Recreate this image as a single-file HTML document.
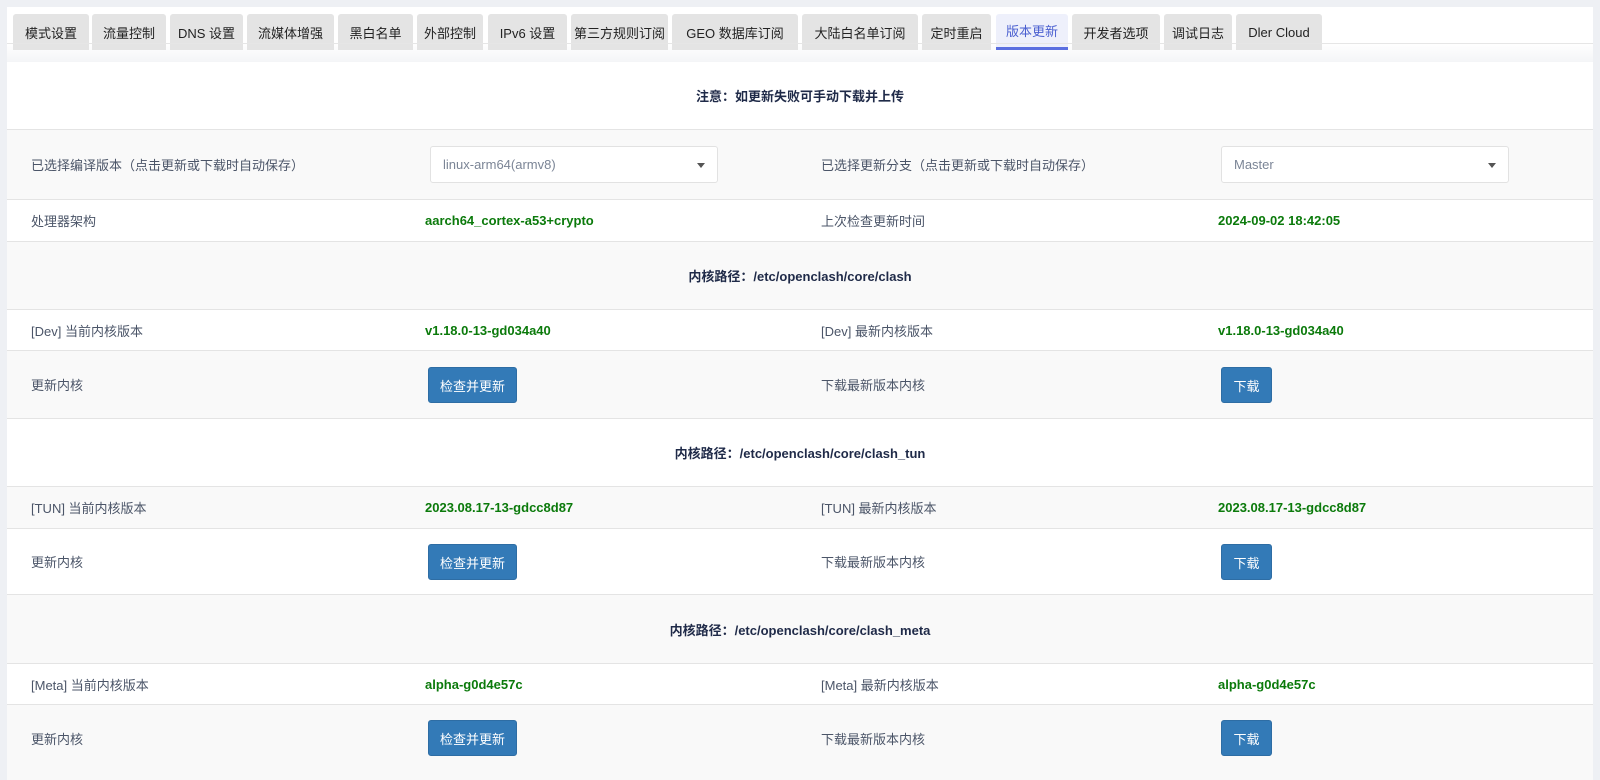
<!DOCTYPE html>
<html><head><meta charset="utf-8"><style>
*{margin:0;padding:0;box-sizing:border-box}
body{width:1600px;height:780px;overflow:hidden;background:#eef0f4;font-family:"Liberation Sans","Noto Sans CJK SC",sans-serif;font-size:13px;color:#4b5568;position:relative}
.wrap{position:absolute;left:7px;top:7px;width:1586px;height:773px;background:#fff}
.tab{position:absolute;top:7px;height:36px;background:#e4e4e4;color:#222;font-size:13px;display:flex;align-items:center;justify-content:center;border-radius:3px 3px 0 0}
.tab.act{background:#eef0fb;color:#4a5fd0;border-bottom:3px solid #5b6fe0}
.tabline{position:absolute;left:0;right:0;top:36px;height:1px;background:#e6e6e6}
.grad{position:absolute;left:0;right:0;top:36px;height:19px;background:linear-gradient(#fff,#f4f5f7)}
.row{position:absolute;left:0;width:1586px;border-top:1px solid #e4e4e4}
.w{background:#fff}.g{background:#f9f9f9}
.c{position:absolute;top:0;bottom:0;display:flex;align-items:center}
.v{color:#0b7a0b;font-weight:bold}
.ctr{position:absolute;left:0;right:0;top:0;bottom:0;display:flex;align-items:center;justify-content:center;font-weight:bold;color:#1f2a48}
.sel{position:absolute;height:37px;width:288px;border:1px solid #e2e2e2;border-radius:3px;background:#fff;color:#7b8596;display:flex;align-items:center;padding-left:12px}
.sel:after{content:"";position:absolute;right:12px;top:16px;border:4px solid transparent;border-top:5px solid #555}
.btn{position:absolute;height:36px;background:#337ab7;color:#fff;border-radius:3px;display:flex;align-items:center;justify-content:center;border:1px solid #2e6da4}
</style></head><body>
<div class="wrap">
<div class="grad"></div>
<div class="tab" style="left:6px;width:76px">模式设置</div>
<div class="tab" style="left:85px;width:74px">流量控制</div>
<div class="tab" style="left:163px;width:73px">DNS 设置</div>
<div class="tab" style="left:240px;width:87px">流媒体增强</div>
<div class="tab" style="left:331px;width:75px">黑白名单</div>
<div class="tab" style="left:410px;width:66px">外部控制</div>
<div class="tab" style="left:481px;width:79px">IPv6 设置</div>
<div class="tab" style="left:564px;width:97px">第三方规则订阅</div>
<div class="tab" style="left:665px;width:126px">GEO 数据库订阅</div>
<div class="tab" style="left:795px;width:116px">大陆白名单订阅</div>
<div class="tab" style="left:915px;width:69px">定时重启</div>
<div class="tab act" style="left:989px;width:72px">版本更新</div>
<div class="tab" style="left:1065px;width:88px">开发者选项</div>
<div class="tab" style="left:1157px;width:68px">调试日志</div>
<div class="tab" style="left:1229px;width:86px">Dler Cloud</div>
<div class="tabline"></div>

<div class="row w" style="top:55px;height:67px;border-top:none"><div class="ctr">注意：如更新失败可手动下载并上传</div></div>
<div class="row g" style="top:122px;height:70px">
 <div class="c" style="left:24px">已选择编译版本（点击更新或下载时自动保存）</div>
 <div class="sel" style="left:423px;top:16px">linux-arm64(armv8)</div>
 <div class="c" style="left:814px">已选择更新分支（点击更新或下载时自动保存）</div>
 <div class="sel" style="left:1214px;top:16px">Master</div>
</div>
<div class="row w" style="top:192px;height:42px">
 <div class="c" style="left:24px">处理器架构</div><div class="c v" style="left:418px">aarch64_cortex-a53+crypto</div>
 <div class="c" style="left:814px">上次检查更新时间</div><div class="c v" style="left:1211px">2024-09-02 18:42:05</div>
</div>
<div class="row g" style="top:234px;height:68px"><div class="ctr">内核路径：/etc/openclash/core/clash</div></div>
<div class="row w" style="top:302px;height:41px">
 <div class="c" style="left:24px">[Dev] 当前内核版本</div><div class="c v" style="left:418px">v1.18.0-13-gd034a40</div>
 <div class="c" style="left:814px">[Dev] 最新内核版本</div><div class="c v" style="left:1211px">v1.18.0-13-gd034a40</div>
</div>
<div class="row g" style="top:343px;height:68px">
 <div class="c" style="left:24px">更新内核</div><div class="btn" style="left:421px;top:16px;width:89px">检查并更新</div>
 <div class="c" style="left:814px">下载最新版本内核</div><div class="btn" style="left:1214px;top:16px;width:51px">下载</div>
</div>
<div class="row w" style="top:411px;height:68px"><div class="ctr">内核路径：/etc/openclash/core/clash_tun</div></div>
<div class="row g" style="top:479px;height:42px">
 <div class="c" style="left:24px">[TUN] 当前内核版本</div><div class="c v" style="left:418px">2023.08.17-13-gdcc8d87</div>
 <div class="c" style="left:814px">[TUN] 最新内核版本</div><div class="c v" style="left:1211px">2023.08.17-13-gdcc8d87</div>
</div>
<div class="row w" style="top:521px;height:66px">
 <div class="c" style="left:24px">更新内核</div><div class="btn" style="left:421px;top:15px;width:89px">检查并更新</div>
 <div class="c" style="left:814px">下载最新版本内核</div><div class="btn" style="left:1214px;top:15px;width:51px">下载</div>
</div>
<div class="row g" style="top:587px;height:69px"><div class="ctr">内核路径：/etc/openclash/core/clash_meta</div></div>
<div class="row w" style="top:656px;height:41px">
 <div class="c" style="left:24px">[Meta] 当前内核版本</div><div class="c v" style="left:418px">alpha-g0d4e57c</div>
 <div class="c" style="left:814px">[Meta] 最新内核版本</div><div class="c v" style="left:1211px">alpha-g0d4e57c</div>
</div>
<div class="row g" style="top:697px;height:76px">
 <div class="c" style="left:24px;bottom:8px">更新内核</div><div class="btn" style="left:421px;top:15px;width:89px">检查并更新</div>
 <div class="c" style="left:814px;bottom:8px">下载最新版本内核</div><div class="btn" style="left:1214px;top:15px;width:51px">下载</div>
</div>
</div>
</body></html>
